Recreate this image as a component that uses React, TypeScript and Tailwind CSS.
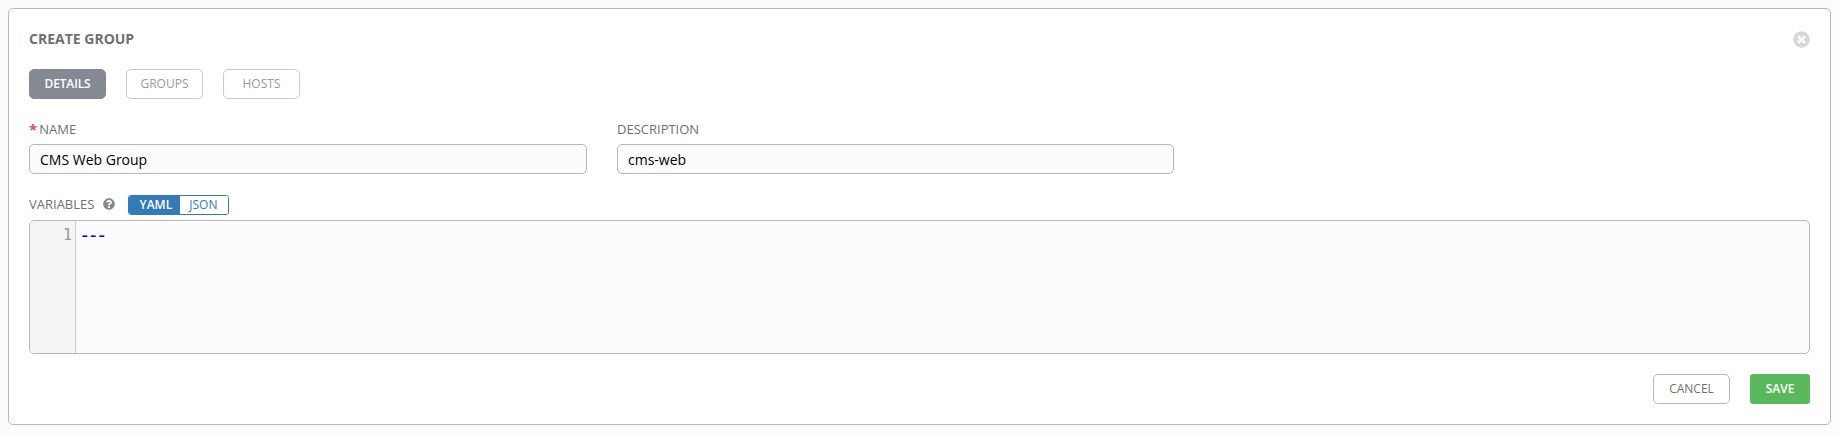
import { useState } from "react";
import { FaTimesCircle, FaQuestionCircle } from "react-icons/fa";

const tabs = ["DETAILS", "GROUPS", "HOSTS"];

function Tab({ label, active }: { label: string; active: boolean }) {
  return (
    <button
      className={
        active
          ? "h-[30px] w-[77px] rounded-[5px] border border-[#848992] bg-[#848992] text-[12px] leading-[28px] font-semibold tracking-[-0.15px] text-white"
          : "h-[30px] w-[77px] rounded-[5px] border border-[#cccccc] bg-white text-[12px] leading-[28px] text-[#9a9a9a]"
      }
    >
      {label}
    </button>
  );
}

function Field({ label, value, required, className }: { label: string; value: string; required?: boolean; className: string }) {
  const [text, setText] = useState(value);
  return (
    <label className={className}>
      <span className="flex h-5 items-center text-[13px] leading-5 text-[#707070]">
        {required && <span className="mr-[2px] text-[15px] font-bold text-[#d9534f]">*</span>}
        {label}
      </span>
      <input
        className="mt-[5px] block h-[30px] w-full rounded-[5px] border border-[#b7b7b7] bg-[#fcfcfc] px-[10px] text-[14px] text-black outline-none"
        value={text}
        onChange={(e) => setText(e.target.value)}
      />
    </label>
  );
}

export default function App() {
  return (
    <div className="h-[435px] bg-[#fcfcfc] p-2 font-['Open_Sans',sans-serif]">
      <main className="flex h-[417px] w-[1823px] flex-col rounded-[5px] border border-[#b7b7b7] bg-white px-5 pb-5">
        <header className="mt-5 flex h-5 items-center justify-between">
          <h1 className="text-[14px] leading-5 font-bold text-[#707070]">CREATE GROUP</h1>
          <FaTimesCircle className="h-[17px] w-[17px] text-[#d7d7d7]" />
        </header>
        <nav className="mt-5 flex gap-5">
          {tabs.map((t, i) => (
            <Tab key={t} label={t} active={i === 0} />
          ))}
        </nav>
        <div className="mt-5 flex gap-[30px]">
          <Field label="NAME" value="CMS Web Group" required className="w-[558px]" />
          <Field label="DESCRIPTION" value="cms-web" className="w-[557px]" />
        </div>
        <div className="mt-[21px] flex h-5 items-center">
          <span className="h-5 text-[13px] leading-[18px] text-[#707070]">VARIABLES</span>
          <FaQuestionCircle className="mb-[2px] ml-[9px] h-3 w-3 text-[#848992]" />
          <div className="ml-[13px] flex h-5 w-[101px] overflow-hidden rounded-[3px] border border-[#337ab7] text-[12px] leading-[18px]">
            <button className="w-[51px] bg-[#337ab7] pl-[2px] font-semibold text-white">YAML</button>
            <button className="flex-1 bg-white pr-[2px] text-[#337ab7]">JSON</button>
          </div>
        </div>
        <div className="mt-[5px] flex h-[134px] overflow-hidden rounded-[5px] border border-[#b7b7b7] bg-[#fcfcfc] font-['DejaVu_Sans_Mono',monospace] text-[14px] leading-5">
          <div className="w-[46px] border-r border-[#cccccc] bg-[#f5f5f5] pt-1 pr-[3px] text-right text-[15px] text-[#999999]">1</div>
          <div className="pt-1 pl-[3px] text-[19px] leading-5 tracking-[-3px] text-[#0000ff]">---</div>
        </div>
        <footer className="mt-5 flex justify-end gap-5">
          <button className="h-[30px] w-[77px] rounded-[5px] border border-[#b7b7b7] bg-white text-[12px] leading-[28px] text-[#707070]">CANCEL</button>
          <button className="h-[30px] w-[60px] rounded-[3px] bg-[#5cb85c] text-[12px] leading-[30px] font-semibold text-white">SAVE</button>
        </footer>
      </main>
    </div>
  );
}
